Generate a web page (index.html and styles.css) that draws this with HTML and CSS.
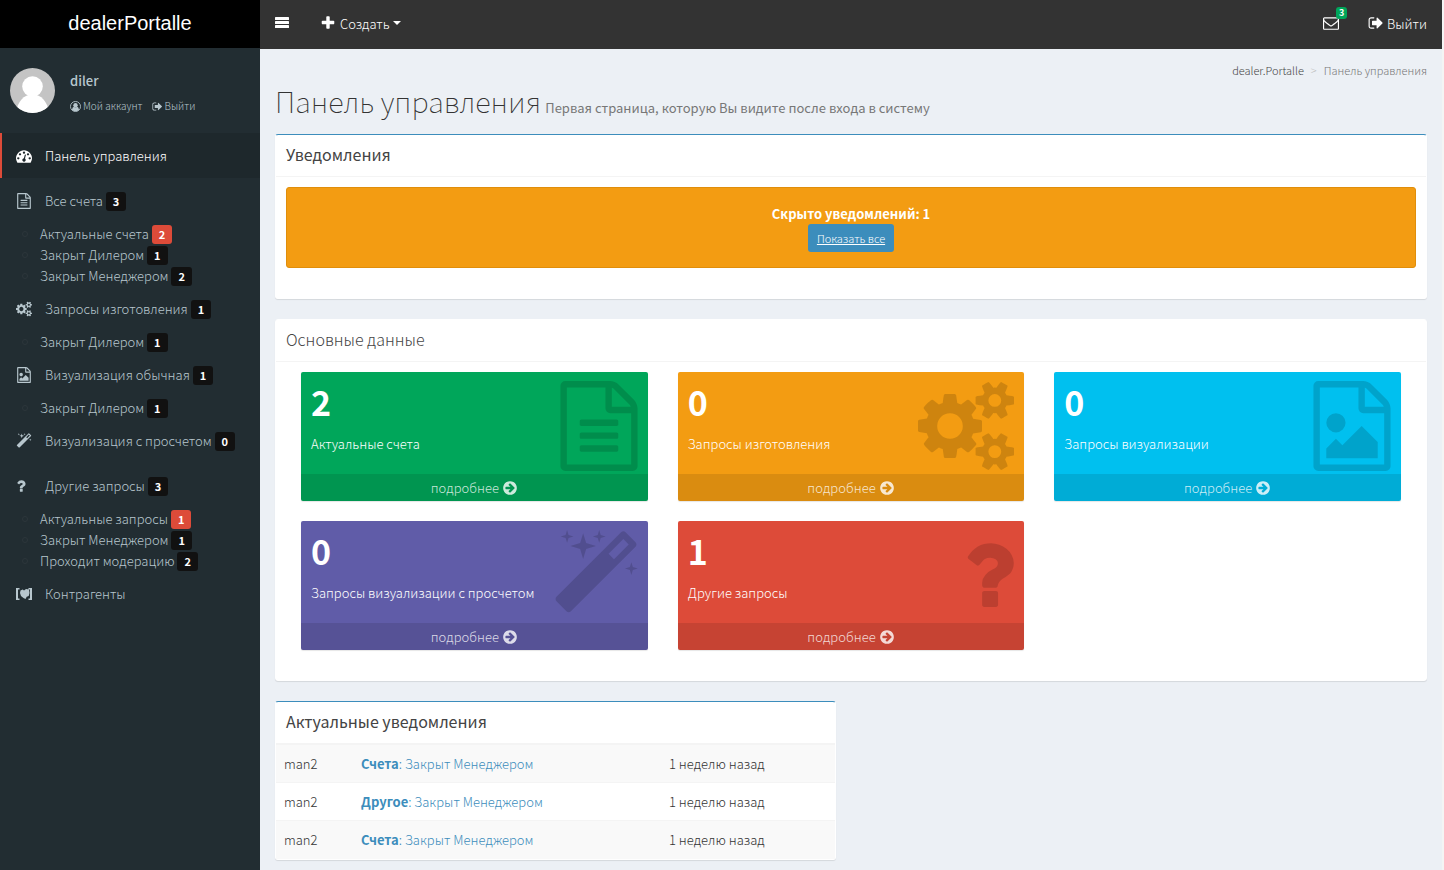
FILE: index.html
```html
<!DOCTYPE html>
<html lang="ru">
<head>
<meta charset="utf-8">
<title>dealerPortalle</title>
<link rel="stylesheet" href="styles.css">
</head>
<body>
<svg class="sprite" aria-hidden="true">
  <symbol id="file-text" viewBox="0 0 1792 1792"><path d="M1596 380q28 28 48 76t20 88v1152q0 40-28 68t-68 28h-1344q-40 0-68-28t-28-68v-1600q0-40 28-68t68-28h896q40 0 88 20t76 48zm-444-244v376h376q-10-29-22-41l-313-313q-12-12-41-22zm384 1528v-1024h-416q-40 0-68-28t-28-68v-416h-768v1536h1280zm-1024-864q0-14 9-23t23-9h704q14 0 23 9t9 23v64q0 14-9 23t-23 9h-704q-14 0-23-9t-9-23v-64zm736 224q14 0 23 9t9 23v64q0 14-9 23t-23 9h-704q-14 0-23-9t-9-23v-64q0-14 9-23t23-9h704zm0 256q14 0 23 9t9 23v64q0 14-9 23t-23 9h-704q-14 0-23-9t-9-23v-64q0-14 9-23t23-9h704z"/></symbol>
  <symbol id="file-image" viewBox="0 0 1792 1792"><path d="M1596 380q28 28 48 76t20 88v1152q0 40-28 68t-68 28h-1344q-40 0-68-28t-28-68v-1600q0-40 28-68t68-28h896q40 0 88 20t76 48zm-444-244v376h376q-10-29-22-41l-313-313q-12-12-41-22zm384 1528v-1024h-416q-40 0-68-28t-28-68v-416h-768v1536h1280zm-128-448v320h-1024v-192l192-192 128 128 384-384zm-832-192q-80 0-136-56t-56-136 56-136 136-56 136 56 56 136-56 136-136 56z"/></symbol>
  <symbol id="cogs" viewBox="0 0 1920 1792"><path d="M896 896q0-106-75-181t-181-75-181 75-75 181 75 181 181 75 181-75 75-181zm768 512q0-52-38-90t-90-38-90 38-38 90q0 53 37.5 90.5t90.5 37.5 90.5-37.5 37.5-90.5zm0-1024q0-52-38-90t-90-38-90 38-38 90q0 53 37.5 90.5t90.5 37.5 90.5-37.5 37.5-90.5zm-384 421v185q0 10-7 19.5t-16 10.5l-155 24q-11 35-32 76 34 48 90 115 7 11 7 20 0 12-7 19-23 30-82.5 89.5t-78.5 59.5q-11 0-21-7l-115-90q-37 19-77 31-11 108-23 155-7 24-30 24h-186q-11 0-20-7.5t-10-17.5l-23-153q-34-10-75-31l-118 89q-7 7-20 7-11 0-21-8-144-133-144-160 0-9 7-19 10-14 41-53t47-61q-23-44-35-82l-152-24q-10-1-17-9.5t-7-19.5v-185q0-10 7-19.5t16-10.5l155-24q11-35 32-76-34-48-90-115-7-11-7-20 0-12 7-20 22-30 82-89t79-59q11 0 21 7l115 90q34-18 77-32 11-108 23-154 7-24 30-24h186q11 0 20 7.5t10 17.5l23 153q34 10 75 31l118-89q8-7 20-7 11 0 21 8 144 133 144 160 0 8-7 19-12 16-42 54t-45 60q23 48 34 82l152 23q10 2 17 10.5t7 19.5zm640 533v140q0 16-149 31-12 27-30 52 51 113 51 138 0 4-4 7-122 71-124 71-8 0-46-47t-52-68q-20 2-30 2t-30-2q-14 21-52 68t-46 47q-2 0-124-71-4-3-4-7 0-25 51-138-18-25-30-52-149-15-149-31v-140q0-16 149-31 13-29 30-52-51-113-51-138 0-4 4-7 4-2 35-20t59-34 30-16q8 0 46 46.5t52 67.5q20-2 30-2t30 2q51-71 92-112l6-2q4 0 124 70 4 3 4 7 0 25-51 138 17 23 30 52 149 15 149 31zm0-1024v140q0 16-149 31-12 27-30 52 51 113 51 138 0 4-4 7-122 71-124 71-8 0-46-47t-52-68q-20 2-30 2t-30-2q-14 21-52 68t-46 47q-2 0-124-71-4-3-4-7 0-25 51-138-18-25-30-52-149-15-149-31v-140q0-16 149-31 13-29 30-52-51-113-51-138 0-4 4-7 4-2 35-20t59-34 30-16q8 0 46 46.5t52 67.5q20-2 30-2t30 2q51-71 92-112l6-2q4 0 124 70 4 3 4 7 0 25-51 138 17 23 30 52 149 15 149 31z"/></symbol>
  <symbol id="magic" viewBox="0 0 1792 1792"><path d="M1254 581l293-293-107-107-293 293zm447-293q0 27-18 45l-1286 1286q-18 18-45 18t-45-18l-198-198q-18-18-18-45t18-45l1286-1286q18-18 45-18t45 18l198 198q18 18 18 45zm-1351-190l98 30-98 30-30 98-30-98-98-30 98-30 30-98zm350 162l196 60-196 60-60 196-60-196-196-60 196-60 60-196zm930 478l98 30-98 30-30 98-30-98-98-30 98-30 30-98zm-640-640l98 30-98 30-30 98-30-98-98-30 98-30 30-98z"/></symbol>
  <symbol id="question" viewBox="384 0 1024 1792"><path d="M1088 1256v240q0 16-12 28t-28 12h-240q-16 0-28-12t-12-28v-240q0-16 12-28t28-12h240q16 0 28 12t12 28zm316-600q0 54-15.5 101t-35 76.5-55 59.5-57.5 43.5-61 35.5q-41 23-68.5 65t-27.5 67q0 17-12 32.5t-28 15.5h-240q-15 0-25.5-18.5t-10.5-37.5v-45q0-83 65-156.5t143-108.5q59-27 84-56t25-76q0-42-46.5-74t-107.5-32q-65 0-108 29-35 25-107 115-13 16-31 16-12 0-25-8l-164-125q-13-10-15.5-25t5.5-28q160-266 464-266 80 0 161 31t146 83 106 127.5 41 158.5z"/></symbol>
  <symbol id="dashboard" viewBox="0 0 1792 1792"><path d="M384 1152q0-53-37.5-90.5t-90.5-37.5-90.5 37.5-37.5 90.5 37.5 90.5 90.5 37.5 90.5-37.5 37.5-90.5zm192-448q0-53-37.5-90.5t-90.5-37.5-90.5 37.5-37.5 90.5 37.5 90.5 90.5 37.5 90.5-37.5 37.5-90.5zm428 481l101-382q6-26-7.5-48.5t-38.5-29.5-48 6.5-30 39.5l-101 382q-60 5-107 43.5t-63 98.5q-20 77 20 146t117 89 146-20 89-117q16-60-6-117t-72-91zm660-33q0-53-37.5-90.5t-90.5-37.5-90.5 37.5-37.5 90.5 37.5 90.5 90.5 37.5 90.5-37.5 37.5-90.5zm-640-640q0-53-37.5-90.5t-90.5-37.5-90.5 37.5-37.5 90.5 37.5 90.5 90.5 37.5 90.5-37.5 37.5-90.5zm448 192q0-53-37.5-90.5t-90.5-37.5-90.5 37.5-37.5 90.5 37.5 90.5 90.5 37.5 90.5-37.5 37.5-90.5zm320 448q0 261-141 483-19 29-54 29h-1402q-35 0-54-29-141-221-141-483 0-182 71-348t191-286 286-191 348-71 348 71 286 191 191 286 71 348z"/></symbol>
  <symbol id="bars" viewBox="0 0 14 14"><rect y="1" width="14" height="3" rx=".6"/><rect y="5" width="14" height="3" rx=".6"/><rect y="9" width="14" height="3" rx=".6"/></symbol>
  <symbol id="plus" viewBox="0 0 1792 1792"><path d="M1600 736v192q0 40-28 68t-68 28h-416v416q0 40-28 68t-68 28h-192q-40 0-68-28t-28-68v-416h-416q-40 0-68-28t-28-68v-192q0-40 28-68t68-28h416v-416q0-40 28-68t68-28h192q40 0 68 28t28 68v416h416q40 0 68 28t28 68z"/></symbol>
  <symbol id="envelope" viewBox="0 0 1792 1792"><path d="M1664 1504v-768q-32 36-69 66-268 206-426 338-51 43-83 67t-86.500 48.500-102.500 24.500h-2q-48 0-102.500-24.500t-86.500-48.500-83-67q-158-132-426-338-37-30-69-66v768q0 13 9.500 22.500t22.500 9.500h1472q13 0 22.500-9.500t9.500-22.500zm0-1051v-24.500l-.5-13-3-12.500-5.500-9-9-7.500-14-2.500h-1472q-13 0-22.500 9.500t-9.500 22.500q0 168 147 284 193 152 401 317 6 5 35 29.500t46 37.500 44.500 31.500 50.500 27.500 43 9h2q20 0 43-9t50.500-27.500 44.500-31.500 46-37.500 35-29.500q208-165 401-317 54-43 100.500-115.500t46.500-131.500zm128-37v1088q0 66-47 113t-113 47h-1472q-66 0-113-47t-47-113v-1088q0-66 47-113t113-47h1472q66 0 113 47t47 113z"/></symbol>
  <symbol id="sign-out" viewBox="0 0 1792 1792"><path d="M704 1440q0 4 1 20t.5 26.500-3 23.500-10 19.500-20.500 6.500h-320q-119 0-203.500-84.500t-84.500-203.500v-704q0-119 84.500-203.500t203.500-84.500h320q13 0 22.500 9.500t9.500 22.500q0 4 1 20t.5 26.500-3 23.500-10 19.500-20.500 6.500h-320q-66 0-113 47t-47 113v704q0 66 47 113t113 47h312l11.500 1 11.500 3 8 5.500 7 9 2 13.500zm928-544q0 26-19 45l-544 544q-19 19-45 19t-45-19-19-45v-288h-448q-26 0-45-19t-19-45v-384q0-26 19-45t45-19h448v-288q0-26 19-45t45-19 45 19l544 544q19 19 19 45z"/></symbol>
  <symbol id="arrow" viewBox="0 0 1792 1792"><path d="M1413 896q0-27-18-45l-91-91-362-362q-18-18-45-18t-45 18l-91 91q-18 18-18 45t18 45l189 189h-502q-26 0-45 19t-19 45v128q0 26 19 45t45 19h502l-189 189q-19 19-19 45t19 45l91 91q18 18 45 18t45-18l362-362 91-91q18-18 18-45zm251 0q0 209-103 385.500t-279.500 279.500-385.500 103-385.500-103-279.500-279.500-103-385.500 103-385.500 279.500-279.500 385.500-103 385.500 103 279.500 279.500 103 385.500z"/></symbol>
  <symbol id="user-circle" viewBox="0 0 14 14"><circle cx="7" cy="7" r="6.400" fill="none" stroke="currentColor" stroke-width="1.100"/><circle cx="7" cy="5.300" r="2.800"/><path d="M2.500 11.200q.5-3.700 2.600-3.900 1.900 1.500 3.800 0 2.100.2 2.600 3.900Q9.500 13.200 7 13.200t-4.500-2z"/></symbol>
  <symbol id="brackets" viewBox="0 0 16 14"><path d="M0 1h3.500v1.500H2v9h1.500V13H0zm12.500 0H16v12h-3.500v-1.500H14v-9h-1.500zM4.500 3.500l2.200-1L8 3.500l2-1.500 3 .5.500 3.500-.8 3-2 .8L9.500 12 7.500 11 5 9 4 6z"/></symbol>
</svg>

<div class="layout">
  <aside class="sidebar">
    <a class="logo" href="#">dealerPortalle</a>
    <div class="user">
      <svg class="avatar" viewBox="0 0 45 45" role="img" aria-label="diler"><clipPath id="round"><circle cx="22.500" cy="22.500" r="22.500"/></clipPath><g clip-path="url(#round)"><path fill="#c4c4c4" d="M0 0h45v45H0z"/><circle fill="#fff" cx="22.500" cy="18.500" r="10.300"/><ellipse fill="#fff" cx="22.500" cy="44" rx="15.800" ry="17.500"/></g></svg>
      <div>
        <p class="user-name">diler</p>
        <p class="user-links">
          <a href="#"><svg class="i12"><use href="#user-circle"/></svg>Мой аккаунт</a>
          <a href="#"><svg class="i12"><use href="#sign-out"/></svg>Выйти</a>
        </p>
      </div>
    </div>
    <nav>
      <ul class="menu">
        <li><a class="item active" href="#"><svg><use href="#dashboard"/></svg>Панель управления</a></li>
        <li><a class="item" href="#"><svg><use href="#file-text"/></svg>Все счета <b class="badge">3</b></a>
          <ul class="sub">
            <li><a href="#">Актуальные счета <b class="badge red">2</b></a></li>
            <li><a href="#">Закрыт Дилером <b class="badge">1</b></a></li>
            <li><a href="#">Закрыт Менеджером <b class="badge">2</b></a></li>
          </ul></li>
        <li><a class="item" href="#"><svg><use href="#cogs"/></svg>Запросы изготовления <b class="badge">1</b></a>
          <ul class="sub">
            <li><a href="#">Закрыт Дилером <b class="badge">1</b></a></li>
          </ul></li>
        <li><a class="item" href="#"><svg><use href="#file-image"/></svg>Визуализация обычная <b class="badge">1</b></a>
          <ul class="sub">
            <li><a href="#">Закрыт Дилером <b class="badge">1</b></a></li>
          </ul></li>
        <li><a class="item" href="#"><svg><use href="#magic"/></svg>Визуализация с просчетом <b class="badge">0</b></a></li>
        <li><a class="item" href="#"><svg class="narrow"><use href="#question"/></svg>Другие запросы <b class="badge">3</b></a>
          <ul class="sub">
            <li><a href="#">Актуальные запросы <b class="badge red">1</b></a></li>
            <li><a href="#">Закрыт Менеджером <b class="badge">1</b></a></li>
            <li><a href="#">Проходит модерацию <b class="badge">2</b></a></li>
          </ul></li>
        <li><a class="item" href="#"><svg><use href="#brackets"/></svg>Контрагенты</a></li>
      </ul>
    </nav>
  </aside>

  <div class="page">
    <header class="topbar">
      <button class="toggle" type="button" aria-label="Меню"><svg><use href="#bars"/></svg></button>
      <button class="create" type="button"><svg><use href="#plus"/></svg>Создать<span class="caret"></span></button>
      <a class="mail" href="#" aria-label="Сообщения"><svg><use href="#envelope"/></svg><b class="count">3</b></a>
      <a class="logout" href="#"><svg><use href="#sign-out"/></svg>Выйти</a>
    </header>

    <main class="content">
      <nav class="crumbs"><a href="#">dealer.Portalle</a><span class="sep">&gt;</span><span>Панель управления</span></nav>
      <h1>Панель управления <small>Первая страница, которую Вы видите после входа в систему</small></h1>

      <section class="box primary">
        <h2>Уведомления</h2>
        <div class="box-body">
          <div class="alert">
            <strong>Скрыто уведомлений: 1</strong>
            <a class="show-all" href="#">Показать все</a>
          </div>
        </div>
      </section>

      <section class="box">
        <h2 class="light">Основные данные</h2>
        <div class="tiles">
          <article class="tile green"><div class="inner"><h3>2</h3><p>Актуальные счета</p><svg class="big"><use href="#file-text"/></svg></div><a href="#">подробнее <svg><use href="#arrow"/></svg></a></article>
          <article class="tile orange"><div class="inner"><h3>0</h3><p>Запросы изготовления</p><svg class="big wide"><use href="#cogs"/></svg></div><a href="#">подробнее <svg><use href="#arrow"/></svg></a></article>
          <article class="tile aqua"><div class="inner"><h3>0</h3><p>Запросы визуализации</p><svg class="big"><use href="#file-image"/></svg></div><a href="#">подробнее <svg><use href="#arrow"/></svg></a></article>
          <article class="tile purple"><div class="inner"><h3>0</h3><p>Запросы визуализации с просчетом</p><svg class="big wand"><use href="#magic"/></svg></div><a href="#">подробнее <svg><use href="#arrow"/></svg></a></article>
          <article class="tile crimson"><div class="inner"><h3>1</h3><p>Другие запросы</p><svg class="big narrow"><use href="#question"/></svg></div><a href="#">подробнее <svg><use href="#arrow"/></svg></a></article>
        </div>
      </section>

      <section class="box primary half">
        <h2>Актуальные уведомления</h2>
        <table>
          <tbody>
            <tr><td class="who">man2</td><td class="what"><a href="#"><b>Счета</b>: Закрыт Менеджером</a></td><td>1 неделю назад</td></tr>
            <tr><td class="who">man2</td><td class="what"><a href="#"><b>Другое</b>: Закрыт Менеджером</a></td><td>1 неделю назад</td></tr>
            <tr><td class="who">man2</td><td class="what"><a href="#"><b>Счета</b>: Закрыт Менеджером</a></td><td>1 неделю назад</td></tr>
          </tbody>
        </table>
      </section>
    </main>
  </div>
</div>
</body>
</html>
```
FILE: styles.css
```css
* { box-sizing: border-box; }
body {
  margin: 0;
  background: #f4f4f4;
  color: #333;
  font-family: "Noto Sans CJK SC", "Noto Sans", sans-serif;
  font-size: 13px;
  font-weight: 300;
  line-height: 21px;
}
a { color: inherit; text-decoration: none; }
h1, h2, h3, p, ul { margin: 0; padding: 0; font-weight: 300; }
ul { list-style: none; }
button { border: 0; background: none; color: inherit; font: inherit; padding: 0; cursor: pointer; }
svg { fill: currentColor; flex: none; }
b, strong { font-weight: 700; }
.sprite { display: none; }

.layout { display: flex; min-height: 100vh; padding-right: 2px; }

/* Sidebar */
.sidebar { flex: none; width: 260px; background: #222d32; color: #b8c7ce; }
.logo {
  display: block;
  padding-bottom: 2px;
  background: #000;
  color: #fff;
  font-family: "Liberation Sans", Arial, sans-serif;
  font-size: 20px;
  font-weight: 400;
  line-height: 46px;
  text-align: center;
}
.user { display: flex; gap: 15px; height: 85px; padding: 20px 10px; }
.avatar { width: 45px; height: 45px; }
.user-name { font-weight: 500; line-height: 26px; }
.user-links { display: flex; gap: 9px; font-size: 10px; line-height: 24px; }
.user-links a { display: flex; align-items: center; gap: 2px; }
.i12 { width: 11px; height: 11px; }
.item { display: flex; align-items: center; height: 45px; padding-left: 16px; white-space: pre; }
.item svg { width: 16px; height: 16px; margin-right: 13px; }
.item svg.narrow { width: 10px; margin-right: 19px; }
.active { border-left: 2px solid #dd4b39; padding-left: 14px; background: #1e282c; color: #fff; }
.badge {
  display: inline-block;
  margin-top: 2px;
  padding: 0 7px;
  border-radius: 3px;
  background: #111;
  color: #fff;
  font-size: 11px;
  line-height: 19px;
}
.badge.red { background: #dd4b39; }
.sub a { display: flex; align-items: center; height: 21px; padding-left: 22px; white-space: pre; }
.sub a::before { content: ""; width: 6px; height: 6px; margin-right: 12px; border: 1px solid #2c363b; border-radius: 50%; box-sizing: border-box; }

/* Top bar */
.page { flex: 1; min-width: 0; background: #ecf0f5; }
.topbar { display: flex; align-items: center; height: 49px; padding: 0 15px 3px; background: #333; color: #fff; }
.toggle svg { display: block; width: 14px; height: 14px; }
.create { display: flex; align-items: center; margin-left: 31px; margin-right: auto; }
.create svg { width: 16px; height: 16px; margin-right: 4px; }
.caret { margin-left: 3px; border: 4px solid transparent; border-top-color: #fff; border-bottom: 0; }
.mail { position: relative; margin-right: 29px; }
.mail svg { display: block; width: 16px; height: 16px; }
.count {
  position: absolute;
  top: -8px;
  left: 13px;
  padding: 0 3px;
  border-radius: 3px;
  background: #00a65a;
  font-size: 9px;
  line-height: 12px;
}
.logout { display: flex; align-items: center; gap: 3px; }
.logout svg { width: 16px; height: 16px; }

/* Content */
.content { padding: 10px 15px; }
.crumbs { display: flex; justify-content: flex-end; font-size: 11px; line-height: 22px; color: #777; }
.crumbs a { color: #444; }
.sep { margin: 0 7px; color: #bbb; }
h1 { display: flex; align-items: baseline; gap: 4px; margin-bottom: 15px; font-size: 29px; font-weight: 100; line-height: 38px; }
h1 small { font-size: 13px; font-weight: 400; line-height: 21px; color: #777; }

.box { margin-bottom: 20px; border: 1px solid #fff; border-radius: 3px; background: #fff; box-shadow: 0 1px 1px rgba(0, 0, 0, .1); }
.primary { border-top-color: #3c8dbc; }
h2 { padding: 9px 10px 11px; border-bottom: 1px solid #f4f4f4; color: #444; font-size: 16px; font-weight: 400; line-height: 21px; }
h2.light { font-weight: 300; }
.box-body { padding: 10px 10px 30px; }
.alert {
  display: flex;
  flex-direction: column;
  align-items: center;
  padding: 15px;
  border: 1px solid #e08e0b;
  border-radius: 3px;
  background: #f39c12;
  color: #fff;
}
.show-all { padding: 0 9px; border-radius: 3px; background: #3c8dbc; font-size: 11px; line-height: 28px; text-decoration: underline; }

.tiles { display: grid; grid-template-columns: repeat(3, 1fr); gap: 20px 30px; padding: 10px 25px 30px; }
.tile { border-radius: 2px; color: #fff; box-shadow: 0 1px 1px rgba(0, 0, 0, .1); overflow: hidden; }
.inner { position: relative; height: 102px; padding: 9px 10px; }
.tile h3 { margin-bottom: 10px; font-size: 34px; font-weight: 700; line-height: 42px; }
.big { position: absolute; top: 9px; right: 4px; width: 90px; height: 90px; color: rgba(0, 0, 0, .15); }
.big.wide { right: 10px; width: 96px; }
.big.wand { right: 7px; }
.big.narrow { right: 10px; width: 51px; }
.tile > a { display: flex; justify-content: center; align-items: center; gap: 3px; height: 27px; background: rgba(0, 0, 0, .1); color: rgba(255, 255, 255, .8); }
.tile > a svg { width: 16px; height: 16px; }
.green { background: #00a65a; }
.orange { background: #f39c12; }
.aqua { background: #00c0ef; }
.purple { background: #605ca8; }
.crimson { background: #dd4b39; }

.half { width: calc(50% - 15px); }
table { width: 100%; border-collapse: collapse; }
td { height: 38px; padding: 0 8px; border-top: 1px solid #f4f4f4; }
tr:nth-child(odd) { background: #f9f9f9; }
.who { width: 77px; }
.what { width: 308px; color: #3c8dbc; }
```
